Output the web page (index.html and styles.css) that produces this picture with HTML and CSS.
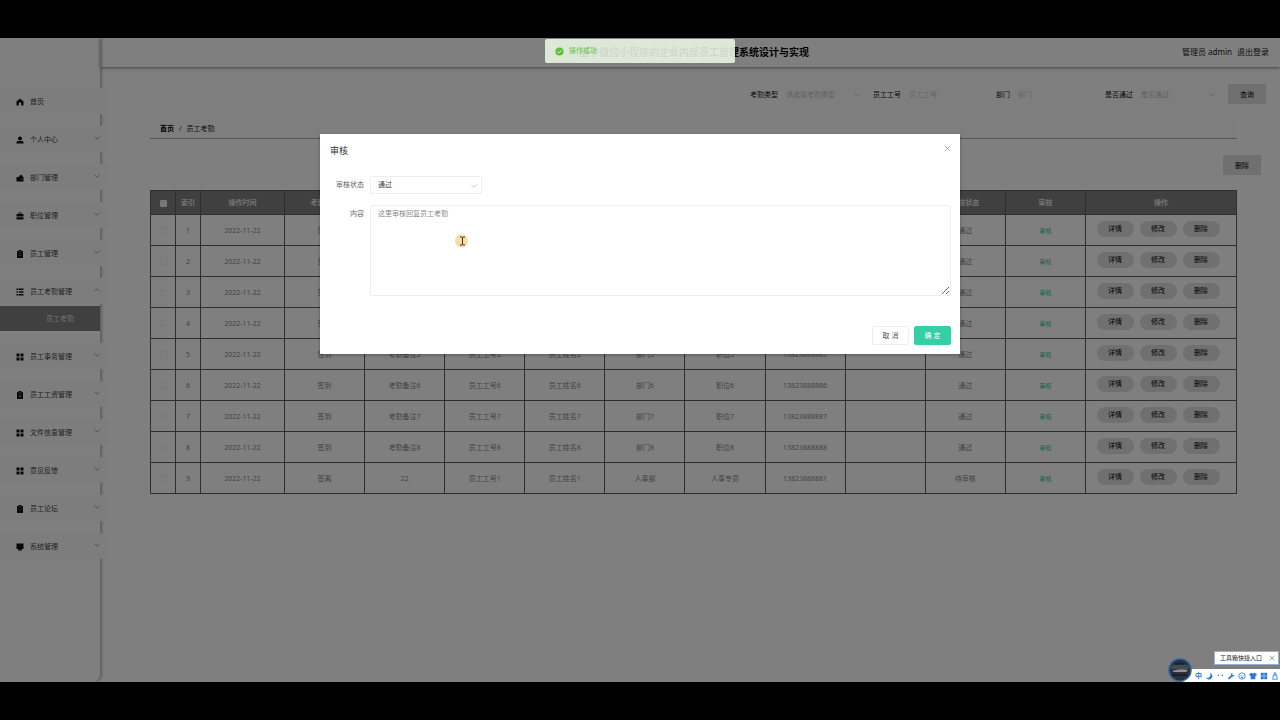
FILE: index.html
```html
<!DOCTYPE html>
<html lang="zh-CN">
<head>
<meta charset="utf-8">
<title>员工考勤</title>
<link rel="stylesheet" href="styles.css">
</head>
<body>
<svg class="sprite" aria-hidden="true">
  <symbol id="down" viewBox="0 0 8 8"><path d="M1.5 2.8 4 5.2 6.500 2.800" fill="none" stroke="currentColor" stroke-width=".8"/></symbol>
  <symbol id="up" viewBox="0 0 8 8"><path d="M1.5 5.200 4 2.800 6.500 5.200" fill="none" stroke="currentColor" stroke-width=".8"/></symbol>
  <symbol id="home" viewBox="0 0 16 16"><path d="M8 1 15 7v8h-4.500v-4a2.500 2.500 0 0 0-5 0v4H1V7z"/></symbol>
  <symbol id="user" viewBox="0 0 16 16"><circle cx="8" cy="5" r="4"/><path d="M1 15v-2q0-3 3-3h8q3 0 3 3v2z"/></symbol>
  <symbol id="wallet" viewBox="0 0 16 16"><path d="M1 6h4l5-5 4 4-1 1h2v9H1z"/><path d="M9 10h6" stroke="#999" fill="none"/></symbol>
  <symbol id="case" viewBox="0 0 16 16"><path d="M5 4V1h6v3h4v5H1V4zm1.500 0h3V2.500h-3zM1 10.500h14V15H1z"/></symbol>
  <symbol id="clip" viewBox="0 0 16 16"><path d="M2 2h3V0h6v2h3v14H2z"/><path d="M5 3.500h6M5 7.500h6M5 11h6" stroke="#999" fill="none"/></symbol>
  <symbol id="clipx" viewBox="0 0 16 16"><path d="M2 2h3V0h6v2h3v14H2z"/><path d="M5 3.500h6M5.500 7 8 9.500 10.500 7M8 9v5M5.500 11h5" stroke="#aaa" fill="none"/></symbol>
  <symbol id="clipok" viewBox="0 0 16 16"><path d="M2 2h3V0h6v2h3v14H2z"/><path d="M5 3.500h6M5 9.500l2 2 4-4" stroke="#bbb" fill="none"/></symbol>
  <symbol id="list" viewBox="0 0 16 16"><path d="M1 1h3v3H1zm4 0h10v3H5zM1 6.500h3v3H1zm5 0h9v3H6zM1 12h3v3H1zm4 0h10v3H5z"/></symbol>
  <symbol id="grid" viewBox="0 0 16 16"><path d="M1 1h6v6H1zm8 0h6v6H9zM1 9h6v6H1zm8 0h6v6H9z"/></symbol>
  <symbol id="screen" viewBox="0 0 16 16"><path d="M1 1h14v11h-4l1 3H4l1-3H1z"/></symbol>
  <symbol id="close" viewBox="0 0 8 8"><path d="M1 1 7 7M7 1 1 7" fill="none" stroke="currentColor" stroke-width=".9"/></symbol>
</svg>
<div class="stage">
  <aside class="sidebar">
    <ul class="menu">
      <li><a class="item" href="#"><svg class="icon"><use href="#home"/></svg><span>首页</span></a></li>
      <li><a class="item" href="#"><svg class="icon"><use href="#user"/></svg><span>个人中心</span><svg class="arrow"><use href="#down"/></svg></a></li>
      <li><a class="item" href="#"><svg class="icon"><use href="#wallet"/></svg><span>部门管理</span><svg class="arrow"><use href="#down"/></svg></a></li>
      <li><a class="item" href="#"><svg class="icon"><use href="#case"/></svg><span>职位管理</span><svg class="arrow"><use href="#down"/></svg></a></li>
      <li><a class="item" href="#"><svg class="icon"><use href="#clip"/></svg><span>员工管理</span><svg class="arrow"><use href="#down"/></svg></a></li>
      <li><a class="item" href="#"><svg class="icon"><use href="#list"/></svg><span>员工考勤管理</span><svg class="arrow"><use href="#up"/></svg></a>
        <a class="subitem" href="#">员工考勤</a></li>
      <li><a class="item" href="#"><svg class="icon"><use href="#grid"/></svg><span>员工事务管理</span><svg class="arrow"><use href="#down"/></svg></a></li>
      <li><a class="item" href="#"><svg class="icon"><use href="#clipx"/></svg><span>员工工资管理</span><svg class="arrow"><use href="#down"/></svg></a></li>
      <li><a class="item" href="#"><svg class="icon"><use href="#grid"/></svg><span>文件信息管理</span><svg class="arrow"><use href="#down"/></svg></a></li>
      <li><a class="item" href="#"><svg class="icon"><use href="#grid"/></svg><span>意见反馈</span><svg class="arrow"><use href="#down"/></svg></a></li>
      <li><a class="item" href="#"><svg class="icon"><use href="#clipok"/></svg><span>员工论坛</span><svg class="arrow"><use href="#down"/></svg></a></li>
      <li><a class="item" href="#"><svg class="icon"><use href="#screen"/></svg><span>系统管理</span><svg class="arrow"><use href="#down"/></svg></a></li>
    </ul>
  </aside>
  <div class="page">
    <header class="header">
      <span class="side"></span>
      <h1>基于微信小程序的企业内部员工管理系统设计与实现</h1>
      <div class="side account"><span>管理员 admin</span><a href="#">退出登录</a></div>
    </header>
    <main class="content">
      <form class="search">
        <label for="s-type">考勤类型</label>
        <span class="pick"><select id="s-type"><option>请选择考勤类型</option></select><svg class="arrow"><use href="#down"/></svg></span>
        <label for="s-no">员工工号</label><input id="s-no" type="text" placeholder="员工工号">
        <label for="s-dept">部门</label><input id="s-dept" type="text" placeholder="部门">
        <label for="s-pass">是否通过</label>
        <span class="pick"><select id="s-pass"><option>是否通过</option></select><svg class="arrow"><use href="#down"/></svg></span>
        <button class="action" type="button">查询</button>
      </form>
      <nav class="crumbs"><b>首页</b><span>/</span><span>员工考勤</span></nav>
      <div class="tools"><button class="action" type="button">删除</button></div>
      <table class="grid">
        <colgroup><col class="c-check"><col class="c-index"><col class="c-time"><col><col><col><col><col><col><col><col><col><col><col class="c-ops"></colgroup>
        <thead><tr><th><input type="checkbox" aria-label="全选"></th><th>索引</th><th>操作时间</th><th>考勤类型</th><th>考勤备注</th><th>员工工号</th><th>员工姓名</th><th>部门</th><th>职位</th><th>手机</th><th>审核回复</th><th>审核状态</th><th>审核</th><th>操作</th></tr></thead>
        <tbody>
          <tr><td><input type="checkbox" aria-label="选择1"></td><td>1</td><td>2022-11-22</td><td>签到</td><td>考勤备注1</td><td>员工工号1</td><td>员工姓名1</td><td>部门1</td><td>职位1</td><td>13823888881</td><td></td><td>通过</td><td><button class="link" type="button">审核</button></td><td><div class="ops"><button type="button">详情</button><button type="button">修改</button><button type="button">删除</button></div></td></tr>
          <tr><td><input type="checkbox" aria-label="选择2"></td><td>2</td><td>2022-11-22</td><td>签到</td><td>考勤备注2</td><td>员工工号2</td><td>员工姓名2</td><td>部门2</td><td>职位2</td><td>13823888882</td><td></td><td>通过</td><td><button class="link" type="button">审核</button></td><td><div class="ops"><button type="button">详情</button><button type="button">修改</button><button type="button">删除</button></div></td></tr>
          <tr><td><input type="checkbox" aria-label="选择3"></td><td>3</td><td>2022-11-22</td><td>签到</td><td>考勤备注3</td><td>员工工号3</td><td>员工姓名3</td><td>部门3</td><td>职位3</td><td>13823888883</td><td></td><td>通过</td><td><button class="link" type="button">审核</button></td><td><div class="ops"><button type="button">详情</button><button type="button">修改</button><button type="button">删除</button></div></td></tr>
          <tr><td><input type="checkbox" aria-label="选择4"></td><td>4</td><td>2022-11-22</td><td>签到</td><td>考勤备注4</td><td>员工工号4</td><td>员工姓名4</td><td>部门4</td><td>职位4</td><td>13823888884</td><td></td><td>通过</td><td><button class="link" type="button">审核</button></td><td><div class="ops"><button type="button">详情</button><button type="button">修改</button><button type="button">删除</button></div></td></tr>
          <tr><td><input type="checkbox" aria-label="选择5"></td><td>5</td><td>2022-11-22</td><td>签到</td><td>考勤备注5</td><td>员工工号5</td><td>员工姓名5</td><td>部门5</td><td>职位5</td><td>13823888885</td><td></td><td>通过</td><td><button class="link" type="button">审核</button></td><td><div class="ops"><button type="button">详情</button><button type="button">修改</button><button type="button">删除</button></div></td></tr>
          <tr><td><input type="checkbox" aria-label="选择6"></td><td>6</td><td>2022-11-22</td><td>签到</td><td>考勤备注6</td><td>员工工号6</td><td>员工姓名6</td><td>部门6</td><td>职位6</td><td>13823888886</td><td></td><td>通过</td><td><button class="link" type="button">审核</button></td><td><div class="ops"><button type="button">详情</button><button type="button">修改</button><button type="button">删除</button></div></td></tr>
          <tr><td><input type="checkbox" aria-label="选择7"></td><td>7</td><td>2022-11-22</td><td>签到</td><td>考勤备注7</td><td>员工工号7</td><td>员工姓名7</td><td>部门7</td><td>职位7</td><td>13823888887</td><td></td><td>通过</td><td><button class="link" type="button">审核</button></td><td><div class="ops"><button type="button">详情</button><button type="button">修改</button><button type="button">删除</button></div></td></tr>
          <tr><td><input type="checkbox" aria-label="选择8"></td><td>8</td><td>2022-11-22</td><td>签到</td><td>考勤备注8</td><td>员工工号8</td><td>员工姓名8</td><td>部门8</td><td>职位8</td><td>13823888888</td><td></td><td>通过</td><td><button class="link" type="button">审核</button></td><td><div class="ops"><button type="button">详情</button><button type="button">修改</button><button type="button">删除</button></div></td></tr>
          <tr><td><input type="checkbox" aria-label="选择9"></td><td>9</td><td>2022-11-22</td><td>签离</td><td>22</td><td>员工工号1</td><td>员工姓名1</td><td>人事部</td><td>人事专员</td><td>13823888881</td><td></td><td>待审核</td><td><button class="link" type="button">审核</button></td><td><div class="ops"><button type="button">详情</button><button type="button">修改</button><button type="button">删除</button></div></td></tr>
        </tbody>
      </table>
    </main>
  </div>

  <div class="overlay">
    <section class="dialog" role="dialog" aria-labelledby="dlg-title">
      <div class="dialog-head"><h2 id="dlg-title">审核</h2><button class="x" type="button" aria-label="关闭"><svg><use href="#close"/></svg></button></div>
      <form class="dialog-form">
        <label for="d-state">审核状态</label>
        <span class="pick"><select id="d-state"><option>通过</option></select><svg class="arrow"><use href="#down"/></svg></span>
        <label for="d-text">内容</label>
        <textarea id="d-text">这里审核回复员工考勤</textarea>
      </form>
      <div class="dialog-foot"><button type="button">取 消</button><button class="primary" type="button">确 定</button></div>
      <svg class="pointer" viewBox="0 0 14 14"><circle cx="6.500" cy="7" r="6.500" fill="#fbdba6"/><path d="M5 3h2l.5.5L8 3h2M7.500 3.500v7M5 11h2l.5-.5.500.500h2" fill="none" stroke="#333"/></svg>
    </section>
  </div>

  <div class="toast" role="status"><svg viewBox="0 0 10 10"><circle cx="5" cy="5" r="4.500" fill="#5fbf38"/><path d="M2.800 5.100 4.400 6.600 7.200 3.700" fill="none" stroke="#fff"/></svg><span>操作成功</span></div>

  <div class="tip"><span>工具箱快捷入口</span><button class="x" type="button" aria-label="关闭提示"><svg><use href="#close"/></svg></button></div>
  <div class="ime">
    <span>中</span>
    <svg viewBox="0 0 10 10"><path d="M6 1a4 4 0 0 1-5 6 4.300 4.300 0 1 0 5-6z"/></svg>
    <svg viewBox="0 0 10 10"><circle cx="3" cy="4" r="1"/><path d="M7 3h1.500v1.500L7.300 6z"/></svg>
    <svg viewBox="0 0 10 10"><path d="M1 8 5 4q-.5-2.500 2-3l-.5 2 1 1 2-.5q-.5 2.500-3 2.500l-4 3.500z"/></svg>
    <svg viewBox="0 0 10 10"><circle cx="5" cy="5" r="4" fill="none" stroke="currentColor"/><path d="M3 4h1v1H3zm3 0h1v1H6zM3 6h4L5 8z"/></svg>
    <svg viewBox="0 0 10 10"><path d="M3 1q2 1.500 4 0l3 2-1.500 2L8 4.500V9H2V4.500L1.500 5 0 3z"/></svg>
    <svg viewBox="0 0 10 10"><path d="M1 1h3.700v3.700H1zm4.300 0H9v3.700H5.300zM1 5.300h3.700V9H1zm4.300 0H9V9H5.300z"/></svg>
    <svg viewBox="0 0 10 10"><path d="M3 4h4l1 5H2zM4 4V1h2v3" fill="none" stroke="currentColor"/></svg>
  </div>
  <svg class="badge" viewBox="0 0 24 24"><circle cx="12" cy="12" r="11" fill="#2b3038" stroke="#2c64a8" stroke-width="1.500"/><path d="M3 8q9-4 18 0v3H3z" fill="#444b54"/><path d="M4 13q8-3 16-1l-2 2H6z" fill="#8d949c"/><path d="M4 17h16M7 6h9" stroke="#111"/></svg>
</div>
</body>
</html>
```
FILE: styles.css
```css
* { box-sizing: border-box; }
body {
  margin: 0;
  padding: 38px 0;
  min-height: 100vh;
  background: #000;
  font: 7px/10px "Noto Sans", "Noto Sans CJK SC", sans-serif;
  color: #444;
}
button, input, select, textarea { font: inherit; color: inherit; margin: 0; }
button { border: 0; padding: 0; background: none; cursor: pointer; }
a { color: inherit; text-decoration: none; }
svg { fill: currentColor; flex: none; }
.sprite { position: absolute; width: 0; height: 0; }

.stage {
  position: relative;
  display: flex;
  min-height: calc(100vh - 76px);
  background: #fff;
  overflow: hidden;
}

.sidebar {
  width: 100px;
  flex: none;
  padding-top: 50px;
  border-radius: 0 0 8px 0;
  box-shadow: 2px 0 3px #bbb;
}
.menu { list-style: none; margin: 0; padding: 0; }
.menu li { margin-bottom: 12px; }
.item {
  display: flex;
  align-items: center;
  gap: 6px;
  height: 26px;
  width: 108px;
  padding: 2px 8px 0 16px;
  background: #fbfbfb;
}
.icon { width: 8px; height: 8px; color: #111; }
.arrow { width: 8px; height: 8px; color: #888; }
.item .arrow { margin: 0 -1px 4px auto; }
.subitem {
  display: block;
  margin-top: 2px;
  padding-left: 46px;
  line-height: 25px;
  background: #808080;
  color: #ddd;
}

.page { flex: 1; min-width: 0; }
.header {
  display: flex;
  align-items: center;
  height: 29px;
  padding: 0 11px 2px 19px;
  box-shadow: 0 1px 3px #888;
}
.header h1 { margin: 0; font-size: 10px; color: #000; }
.side { flex: 1; }
.account { display: flex; justify-content: flex-end; gap: 5px; font-size: 8px; color: #222; }

.content { padding: 17px 14px 20px 50px; }
.search { display: flex; align-items: center; justify-content: flex-end; gap: 4px; color: #111; }
.search input, .pick { width: 83px; height: 20px; margin-right: 4px; }
.search input, .search select {
  border: 0;
  padding: 0 4px;
  background: #fdfdfd;
  color: #c4c4c4;
}
.search label, .search select { padding-top: 2px; }
.search input::placeholder { color: #ccc; }
.pick { position: relative; display: inline-block; }
.pick select { width: 100%; height: 100%; appearance: none; }
.pick .arrow { position: absolute; right: 4px; top: 50%; margin-top: -3px; color: #bbb; pointer-events: none; }
.action { width: 38px; height: 20px; padding-top: 1px; background: #e0e0e0; color: #000; }
.crumbs {
  display: flex;
  gap: 5px;
  align-items: center;
  height: 21px;
  margin: 14px 29px 0 0;
  padding: 1px 10px 0;
  background: #fcfcfc;
  border-bottom: 1px solid #a8a8cc;
  color: #222;
}
.crumbs b { color: #000; }
.tools { display: flex; justify-content: flex-end; padding: 16px 5px 15px 0; }

.grid {
  width: calc(100% - 29px);
  table-layout: fixed;
  border-collapse: collapse;
  text-align: center;
  color: #888;
}
.c-check { width: 25px; }
.c-index { width: 25px; }
.c-time { width: 84px; }
.c-ops { width: 151px; }
.grid th, .grid td { padding: 1px 0 0; border: 1px solid #5c5c5c; }
.grid th { height: 24px; background: #808080; color: #e4e4e4; }
.grid td { height: 31px; }
.grid input {
  appearance: none;
  display: block;
  width: 7px;
  height: 7px;
  margin: 0 auto;
  border: 1px solid #f2f2f2;
  border-radius: 1px;
}
.grid th input { background: #eee; }
.link { font-size: 6px; color: #2cc898; }
.ops { display: flex; justify-content: center; gap: 6px; padding: 0 6px 3px 0; }
.ops button { width: 37px; height: 16px; border-radius: 8px; background: #e0e0e0; color: #000; }

.overlay { position: absolute; inset: 0; background: rgba(0, 0, 0, .5); }
.dialog {
  position: relative;
  width: 50%;
  margin: 96px auto 0;
  background: #fff;
  box-shadow: 0 1px 3px rgba(0, 0, 0, .3);
}
.dialog-head { display: flex; justify-content: space-between; padding: 11px 9px 0 10px; }
.dialog-head h2 { margin: 0; font-size: 9px; line-height: 12px; font-weight: 400; color: #333; }
.x { display: flex; color: #999; }
.x svg { width: 8px; height: 8px; }
.dialog-head .x svg { width: 7px; height: 7px; }
.dialog-form {
  display: grid;
  grid-template-columns: 34px 1fr;
  gap: 11px 6px;
  padding: 19px 9px 0 10px;
}
.dialog-form label { text-align: right; line-height: 18px; color: #666; white-space: nowrap; }
.dialog-form .pick { width: 112px; height: 18px; }
.dialog-form select, .dialog-form textarea {
  border: 1px solid #eee;
  border-radius: 2px;
  background: #fff;
  padding: 0 7px;
}
.dialog-form textarea { display: block; width: 100%; height: 91px; padding: 3px 7px; color: #888; outline: 0; }
.dialog-foot { display: flex; justify-content: flex-end; gap: 5px; padding: 30px 9px 9px; }
.dialog-foot button { width: 37px; height: 19px; border: 1px solid #eee; border-radius: 2px; color: #555; }
.dialog-foot .primary { background: #34cfa4; border-color: #34cfa4; color: #fff; }
.pointer { position: absolute; left: 135px; top: 100px; width: 14px; height: 14px; }

.toast {
  position: absolute;
  top: 1px;
  left: 50%;
  width: 190px;
  height: 24px;
  margin-left: -95px;
  padding: 0 10px;
  display: flex;
  align-items: center;
  gap: 5px;
  border-radius: 2px;
  background: rgba(236, 247, 230, .88);
  color: #67c23a;
}
.toast svg { width: 9px; height: 9px; }

.tip {
  position: absolute;
  right: 1px;
  bottom: 17px;
  height: 14px;
  padding: 0 3px 0 5px;
  display: flex;
  align-items: center;
  gap: 7px;
  background: #fff;
  border: 1px solid #8db2dc;
  font-size: 6px;
  color: #111;
}
.tip .x { color: #4a7fb8; }
.tip .x svg { width: 6px; height: 6px; }
.ime {
  position: absolute;
  right: 0;
  bottom: 0;
  height: 13px;
  padding: 0 1px 0 16px;
  display: flex;
  align-items: center;
  gap: 3px;
  border-radius: 7px 0 0 7px;
  background: #fff;
  color: #2879d8;
}
.ime span { font-weight: 700; }
.ime svg { width: 8px; height: 8px; }
.badge { position: absolute; right: 88px; bottom: 0; width: 24px; height: 24px; }
```
